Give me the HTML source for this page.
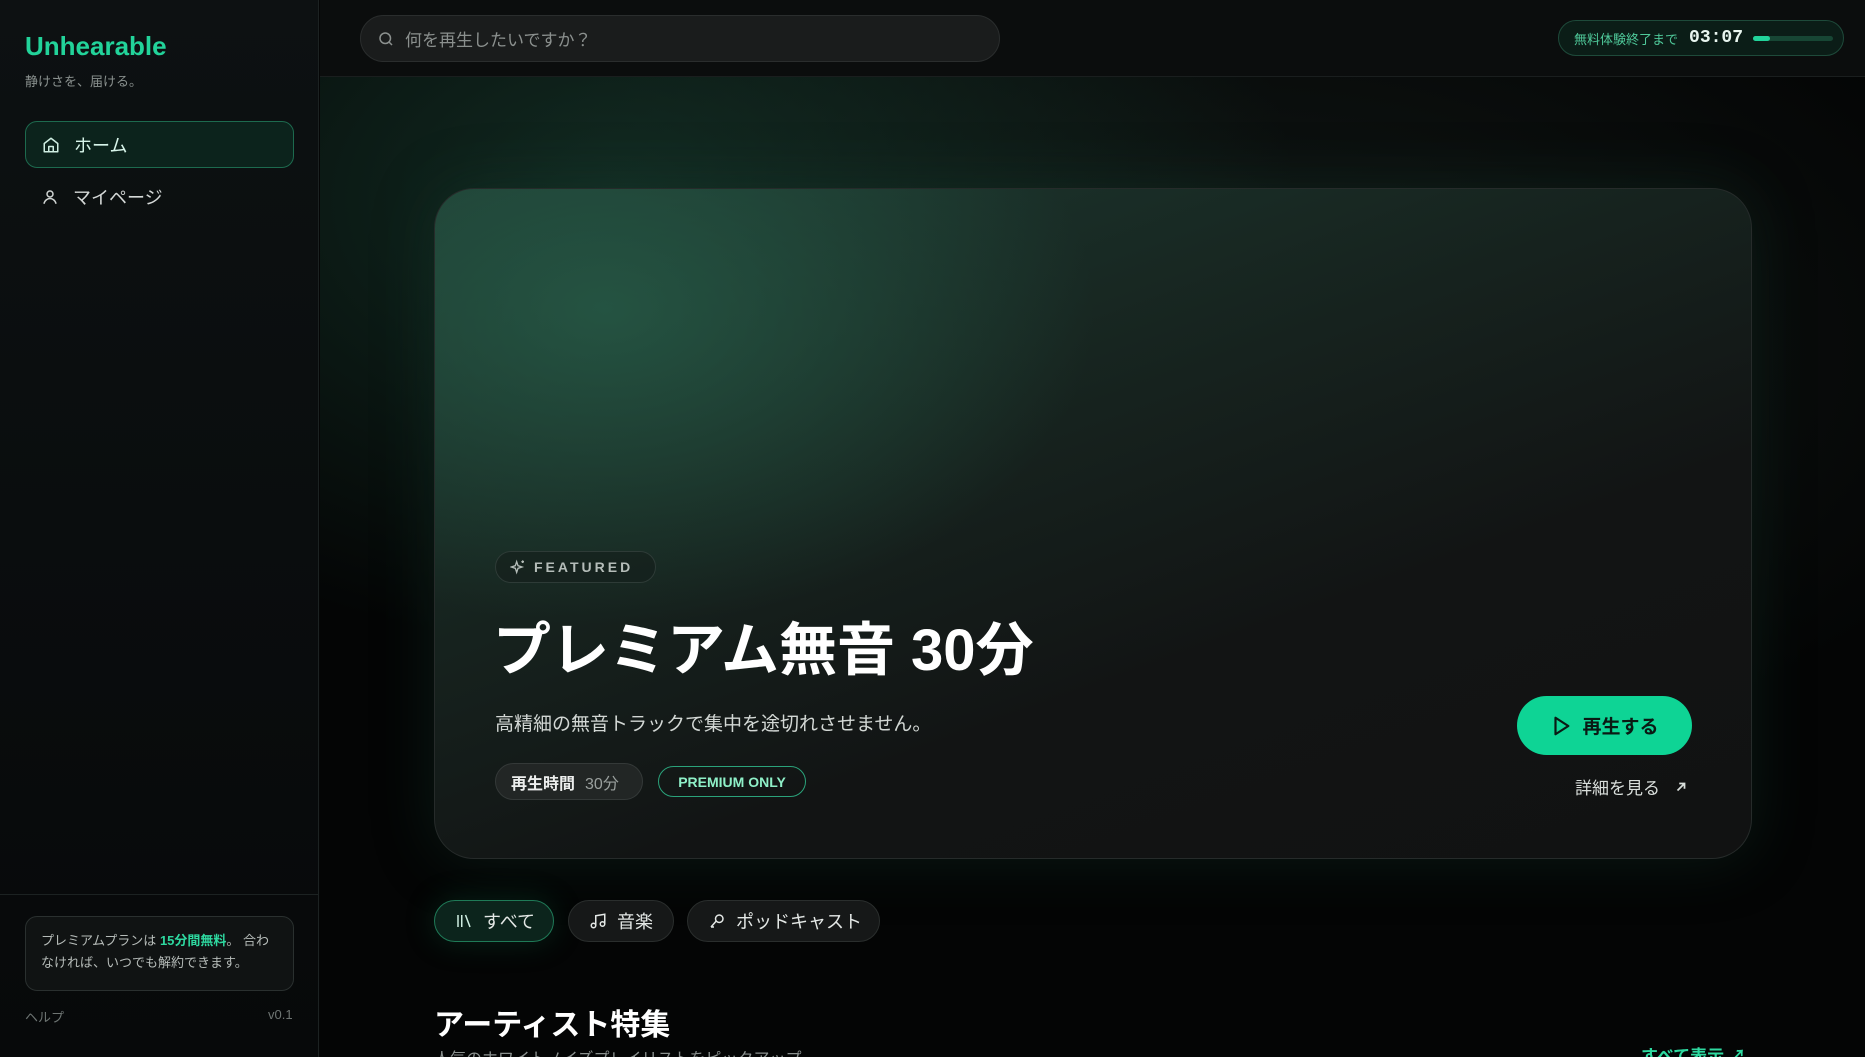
<!DOCTYPE html>
<html><head><meta charset="utf-8"><style>
*{box-sizing:border-box;margin:0;padding:0}
html,body{width:1865px;height:1057px;overflow:hidden}
body{background:#050606;font-family:"Liberation Sans","Noto Sans CJK JP",sans-serif;color:#e8ece9;position:relative}
.side{position:absolute;left:0;top:0;width:319px;height:1057px;background:linear-gradient(180deg,#0d1112,#07090a);border-right:1px solid #1c2222}
.logo{position:absolute;left:25px;top:31px;font-size:26px;font-weight:bold;color:#22d39a}
.tag{position:absolute;left:25px;top:71px;font-size:13px;color:#8a918f}
.nav{position:absolute;left:25px;width:269px;height:47px;border-radius:12px;display:flex;align-items:center;padding-left:16px;font-size:18px;gap:14px}
.nav.on{top:121px;background:#0c231c;border:1px solid #1d6a4e;color:#d8f5ea}
.nav.my{top:173px;color:#d5d9d7}
.divider{position:absolute;left:0;top:894px;width:319px;border-top:1px solid #1c2222}
.info{position:absolute;left:25px;top:916px;width:269px;height:75px;border:1px solid #2a302f;border-radius:12px;background:#101313;padding:13px 15px;font-size:13px;line-height:22px;color:#b6bcb9}
.info b{color:#2ed9a0}
.help{position:absolute;left:25px;top:1007px;font-size:13px;color:#6e7573}
.ver{position:absolute;left:268px;top:1007px;font-size:13px;color:#6e7573}
.main{position:absolute;left:320px;top:0;right:0;bottom:0;background:radial-gradient(ellipse 900px 600px at 300px 200px,rgba(31,80,62,.5),transparent 75%),radial-gradient(ellipse 1100px 600px at 900px 350px,rgba(30,42,38,.55),transparent 75%),#040505}
.top{position:absolute;left:320px;top:0;right:0;height:77px;background:#0b0d0d;border-bottom:1px solid #1a1e1e}
.search{position:absolute;left:360px;top:15px;width:640px;height:47px;border-radius:24px;background:#1a1c1c;border:1px solid #2a2d2d;display:flex;align-items:center;padding-left:16px;gap:10px;font-size:17px;color:#8b908e}
.trial{position:absolute;left:1558px;top:20px;width:286px;height:36px;border-radius:18px;background:#0b1d17;border:1px solid #1e4a3a;display:flex;align-items:center;padding-left:15px;font-size:13px;color:#4fc99a}
.trial .t{font-family:"Liberation Mono",monospace;font-size:18px;font-weight:bold;color:#e8f5ef;margin-left:11px}
.bar{margin-left:10px;width:80px;height:5px;border-radius:3px;background:#174634;position:relative}
.bar:before{content:"";position:absolute;left:0;top:0;width:17px;height:5px;border-radius:3px;background:#22d39a}
.hero{position:absolute;left:434px;top:188px;width:1318px;height:671px;border-radius:40px;border:1px solid #262b2a;background:radial-gradient(ellipse 700px 450px at 170px 120px,rgba(40,95,74,.75),transparent 70%),linear-gradient(160deg,#1d3a31 0%,#172520 35%,#121414 65%,#111212 100%);box-shadow:0 0 60px rgba(20,60,45,.35)}
.feat{position:absolute;left:60px;top:362px;width:161px;height:32px;border-radius:16px;border:1px solid #2e3b37;background:rgba(20,30,27,.6);display:flex;align-items:center;padding-left:14px;gap:8px;font-size:14px;font-weight:bold;letter-spacing:3px;color:#b5bdb9}
.title{position:absolute;left:58px;top:414px;font-size:58px;font-weight:bold;color:#fff}
.desc{position:absolute;left:60px;top:520px;font-size:19px;color:#d2d7d4}
.chip{position:absolute;top:574px;height:37px;border-radius:19px;display:flex;align-items:center;font-size:16px}
.c1{left:60px;width:148px;background:#222625;border:1px solid #343938;padding-left:15px;color:#eceeed;font-weight:bold}
.c1 span{font-weight:normal;color:#9aa09e;margin-left:10px}
.c2{left:223px;width:148px;border:1px solid #2aa27a;justify-content:center;color:#8ff0c8;font-weight:bold;font-size:14px;height:31px;top:577px}
.play{position:absolute;left:1082px;top:507px;width:175px;height:59px;border-radius:30px;background:#0ed495;display:flex;align-items:center;justify-content:center;gap:10px;font-size:19px;font-weight:bold;color:#0a1a14}
.more{position:absolute;left:1140px;top:585px;font-size:17px;color:#dadfdc;display:flex;align-items:center;gap:14px}
.f{position:absolute;top:900px;height:42px;border-radius:21px;background:#161818;border:1px solid #2a2e2d;display:flex;align-items:center;padding-left:20px;gap:10px;font-size:18px;color:#e4e8e6}
.f.on{background:#0c241c;border-color:#1f7a57;box-shadow:0 0 30px rgba(20,120,80,.25)}
.h2{position:absolute;left:434px;top:1000px;font-size:30px;font-weight:bold;color:#fff}
.sub{position:absolute;left:434px;top:1045px;font-size:16px;color:#8a908e}
.all{position:absolute;left:1641px;top:1042px;font-size:17px;font-weight:bold;color:#2ed9a0}
</style></head><body>
<div class="main"></div>
<div class="top"></div>
<div class="side">
<div class="logo">Unhearable</div>
<div class="tag">静けさを、届ける。</div>
<div class="nav on"><svg width="18" height="18" viewBox="0 0 24 24" fill="none" stroke="#cfeee2" stroke-width="2" stroke-linejoin="round"><path d="M3 10l9-7 9 7v11H3z"/><path d="M9 21v-7h6v7"/></svg>ホーム</div>
<div class="nav my"><svg width="18" height="18" viewBox="0 0 24 24" fill="none" stroke="#cfd4d2" stroke-width="2"><circle cx="12" cy="8" r="4"/><path d="M4 21c1-5 5-7 8-7s7 2 8 7"/></svg>マイページ</div>
<div class="divider"></div>
<div class="info">プレミアムプランは <b>15分間無料</b>。 合わなければ、いつでも解約できます。</div>
<div class="help">ヘルプ</div><div class="ver">v0.1</div>
</div>
<div class="search"><svg width="18" height="18" viewBox="0 0 24 24" fill="none" stroke="#8b908e" stroke-width="2"><circle cx="11" cy="11" r="7"/><path d="M20 20l-4-4"/></svg>何を再生したいですか？</div>
<div class="trial">無料体験終了まで<span class="t">03:07</span><div class="bar"></div></div>
<div class="hero">
<div class="feat"><svg width="16" height="16" viewBox="0 0 24 24" fill="none" stroke="#b5bdb9" stroke-width="2"><path d="M10 4l2 6 6 2-6 2-2 6-2-6-6-2 6-2z"/><path d="M19 2v4M17 4h4"/></svg>FEATURED</div>
<div class="title">プレミアム無音 30分</div>
<div class="desc">高精細の無音トラックで集中を途切れさせません。</div>
<div class="chip c1">再生時間<span>30分</span></div>
<div class="chip c2">PREMIUM ONLY</div>
<div class="play"><svg width="22" height="22" viewBox="0 0 24 24" fill="none" stroke="#0a1a14" stroke-width="2.4" stroke-linejoin="round"><path d="M6 3l14 9-14 9z"/></svg>再生する</div>
<div class="more">詳細を見る<svg width="14" height="14" viewBox="0 0 24 24" fill="none" stroke="#dadfdc" stroke-width="3"><path d="M6 18L18 6M9 6h9v9"/></svg></div>
</div>
<div class="f on" style="left:434px;width:120px"><svg width="18" height="18" viewBox="0 0 24 24" fill="none" stroke="#cfeee2" stroke-width="2"><path d="M4 4v16M9 4v16M14 4l6 16"/></svg>すべて</div>
<div class="f" style="left:568px;width:106px"><svg width="18" height="18" viewBox="0 0 24 24" fill="none" stroke="#e4e8e6" stroke-width="2"><path d="M9 18V5l12-2v13"/><circle cx="6" cy="18" r="3"/><circle cx="18" cy="16" r="3"/></svg>音楽</div>
<div class="f" style="left:687px;width:193px"><svg width="18" height="18" viewBox="0 0 24 24" fill="none" stroke="#e4e8e6" stroke-width="2"><circle cx="15" cy="9" r="5"/><path d="M11 12l-7 8M4 20h4"/></svg>ポッドキャスト</div>
<div class="h2">アーティスト特集</div>
<div class="sub">人気のホワイトノイズプレイリストをピックアップ</div>
<div class="all">すべて表示 ↗</div>
</body></html>
